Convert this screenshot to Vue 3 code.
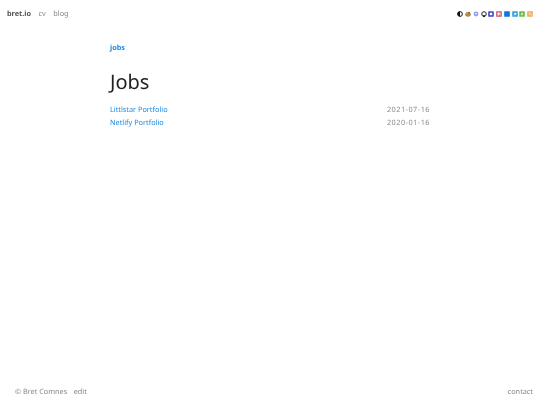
<template>
  <div class="page">
    <header class="top">
      <nav class="nav">
        <a class="brand">bret.io</a>
        <a class="nav-link">cv</a>
        <a class="nav-link">blog</a>
      </nav>
      <div class="social">
        <svg viewBox="0 0 10 10"><circle cx="5" cy="5" r="4" fill="#fff" stroke="#111" stroke-width="1.6" /><path d="M5 1a4 4 0 0 0 0 8z" fill="#111" /></svg>
        <svg viewBox="0 0 10 10"><ellipse cx="5" cy="6" rx="4.8" ry="3.6" fill="#b88a42" /><circle cx="3.3" cy="3" r="1.7" fill="#cfa25a" /><circle cx="6.7" cy="3" r="1.7" fill="#85683a" /></svg>
        <svg viewBox="0 0 10 10"><circle cx="5" cy="5" r="4" fill="#8f9cf5" /><circle cx="5" cy="4.500" r="1.500" fill="#e6e9ff" /></svg>
        <svg viewBox="0 0 10 10"><circle cx="5" cy="5" r="3.800" fill="none" stroke="#1a1a1a" stroke-width="1.600" /><path d="M3.500 10V7h3v3z" fill="#1a1a1a" /></svg>
        <svg viewBox="0 0 10 10"><rect x=".3" y=".3" width="9.400" height="9.400" rx="1.500" fill="#4047d0" /><rect x="3" y="3" width="4" height="4" fill="#fff" /></svg>
        <svg viewBox="0 0 10 10"><rect x=".3" y=".3" width="9.400" height="9.400" rx="1" fill="#d0505a" /><path d="M2.500 7.500v-5h5v5H6.200V4H5.300v3.500z" fill="#fff" /></svg>
        <svg viewBox="0 0 10 10"><rect x=".3" y=".3" width="9.400" height="9.400" rx="1" fill="#0a76e0" /></svg>
        <svg viewBox="0 0 10 10"><rect x=".3" y=".3" width="9.400" height="9.400" rx="1" fill="#35a4e0" /><path d="M2.500 7c3 1 5-1 5-4-1 .5-3 .5-3.500 0-.5 1 0 2 .5 2.500z" fill="#fff" /></svg>
        <svg viewBox="0 0 10 10"><rect x=".3" y=".3" width="9.400" height="9.400" rx="1" fill="#6cbc48" /><path d="M6 2.500 3 5l1 2.500L7 5z" fill="#e6f5df" /></svg>
        <svg viewBox="0 0 10 10"><rect x=".3" y=".3" width="9.400" height="9.400" rx="1" fill="#f0a860" /><path d="M2.500 2.500a5 5 0 0 1 5 5M2.500 5a2.500 2.500 0 0 1 2.500 2.500" fill="none" stroke="#fff" stroke-width="1" /></svg>
      </div>
    </header>

    <main class="content">
      <a class="crumb">jobs</a>
      <h1 class="title">Jobs</h1>
      <ul class="jobs">
        <li v-for="job in jobs" :key="job.name" class="job">
          <a class="job-link">{{ job.name }}</a>
          <span class="job-date">{{ job.date }}</span>
        </li>
      </ul>
    </main>

    <footer class="bottom">
      <div class="foot-left">
        <span>© Bret Comnes</span>
        <a>edit</a>
      </div>
      <a>contact</a>
    </footer>
  </div>
</template>

<script setup>
const jobs = [
  { name: 'Littlstar Portfolio', date: '2021-07-16' },
  { name: 'Netlify Portfolio', date: '2020-01-16' },
]
</script>

<style>
html,
body {
  margin: 0;
  background: #fff;
}
</style>

<style scoped>
.page {
  height: 405px;
  display: flex;
  flex-direction: column;
  font-family: 'Noto Sans', sans-serif;
  font-size: 7.300px;
  line-height: 12px;
  color: #777;
  text-rendering: geometricPrecision;
  will-change: transform;
  overflow: hidden;
}

.top {
  display: flex;
  justify-content: space-between;
  align-items: center;
  padding: 7.500px 7px 0 7px;
}

.nav {
  display: flex;
  gap: 7.500px;
}

.brand {
  font-weight: 700;
  color: #555;
}

.nav-link {
  color: #888;
}

.social {
  display: flex;
  gap: 1.750px;
}

.social svg {
  width: 6px;
  height: 6px;
  display: block;
}

.content {
  flex: 1;
  width: 320px;
  margin-left: 110px;
  padding-top: 22.500px;
}

.crumb {
  display: block;
  font-weight: 700;
  color: #1a8ae5;
}

.title {
  margin: 15px 0 9px;
  font-size: 20px;
  line-height: 26px;
  font-weight: 400;
  color: #222;
}

.jobs {
  list-style: none;
  margin: 0;
  padding: 0;
}

.job {
  display: flex;
  justify-content: space-between;
  height: 12.500px;
}

.job-link {
  color: #1a8ae5;
}

.job-date {
  color: #888;
  letter-spacing: 0.500px;
}

.bottom {
  display: flex;
  justify-content: space-between;
  padding: 0 7px 7.500px 15px;
  color: #888;
}

.foot-left {
  display: flex;
  gap: 6.500px;
}
</style>
